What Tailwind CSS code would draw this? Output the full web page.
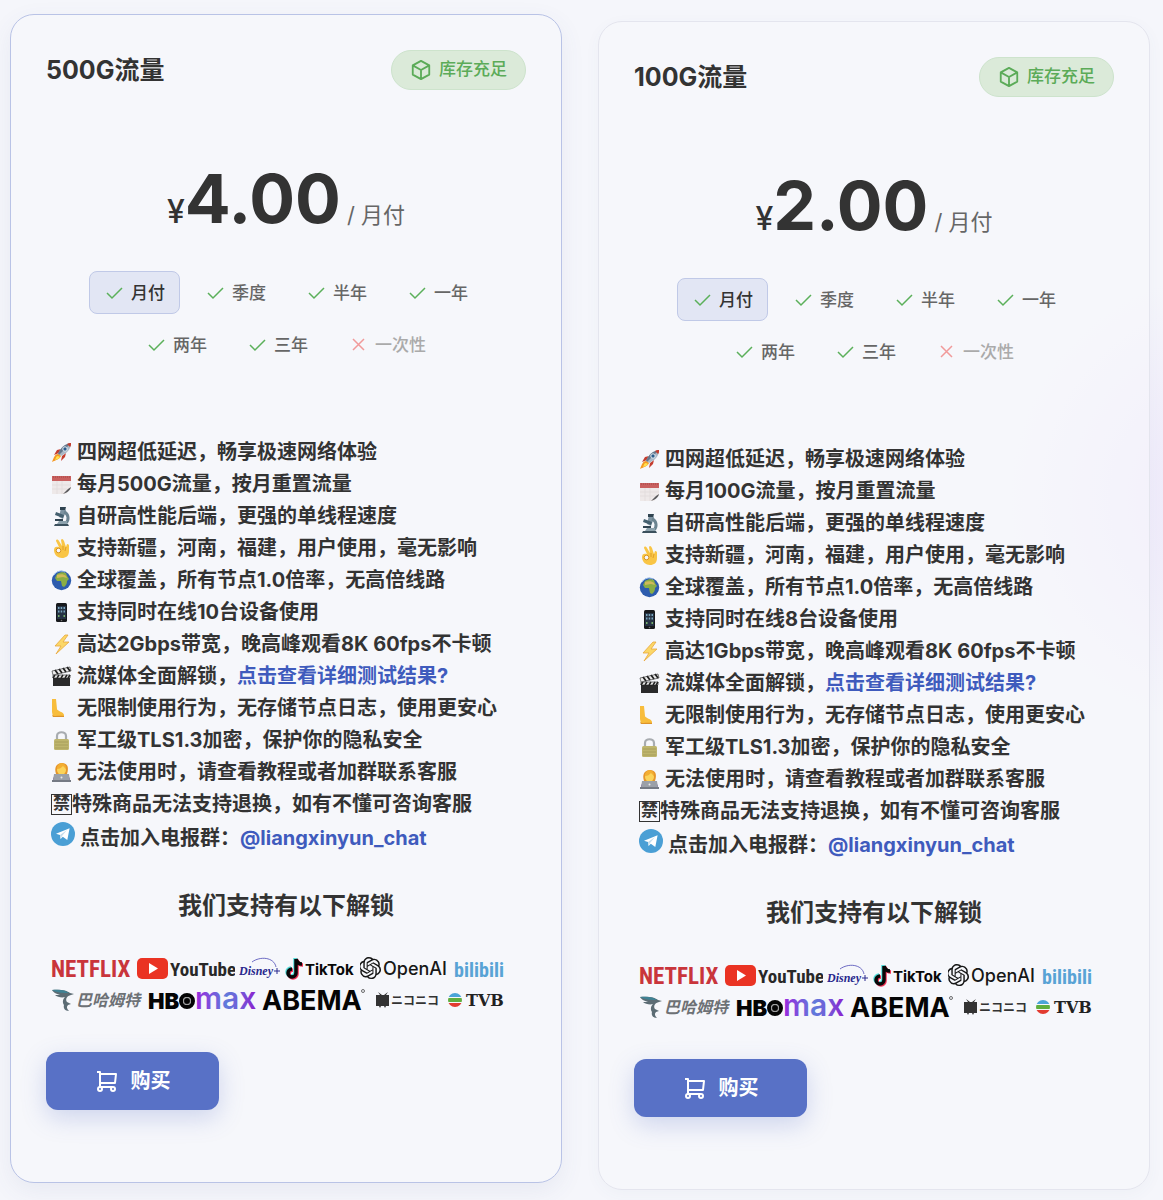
<!doctype html>
<html lang="zh-CN">
  <head>
    <meta charset="UTF-8" />
    <meta name="viewport" content="width=device-width, initial-scale=1.0" />
    <title>套餐</title>
    <script src="https://cdn.jsdelivr.net/npm/@tailwindcss/browser@4"></script>
  </head>
  <body
    class="min-h-screen bg-[#f5f6fb] bg-[radial-gradient(circle_at_1240px_500px,#ece6fa_0,#f5f6fb_230px)] font-['Inter','Noto_Sans_CJK_SC',sans-serif] text-[#333]"
  >
    <main id="plans" class="grid grid-cols-2 items-start gap-9 pt-[21px] pr-[13px] pl-[10px]"></main>

    <script>
      const icons = {
        rocket: `<path d="M8 11 3 13l3-5 4-1z" fill="#c43d2f"/><path d="m11 14-1 5 4-4 1-4z" fill="#c43d2f"/><path d="M7 12c3-7 7-10 13-11 0 6-4 10-10 13z" fill="#a9b8c6"/><path d="M7 12C10 5 14 2 20 1l-12 12z" fill="#66798c"/><path d="M16 2c1-1 3-1 4-1 0 2 0 3-1 4z" fill="#c43d2f"/><circle cx="14" cy="7" r="2.2" fill="#2b5d8c" stroke="#e6edf2"/><path d="M7 12c-3 0-4 3-6 8 4-2 8-3 9-6z" fill="#f59a23"/><path d="M7 14c-2 0-2 2-3 4 2-1 4-1 5-3z" fill="#ffe14d"/>`,
        calendar: `<path d="M1 3h19v12l-5 5H1z" fill="#eee9e9"/><path d="M1 2h19v5H1z" fill="#c9605f"/><path d="M2 3h17" stroke="#a64747" stroke-dasharray="1 1"/><path d="M1 11h19M1 15h15M6 7v13M11 7v13" stroke="#e0dada" stroke-width=".7"/><path d="M20 13c-1 4-5 6-8 7l5-5z" fill="#59595c"/>`,
        microscope: `<path d="M10 2l4-1 1 4-3 8-4-2z" fill="#7d93a1"/><path d="M9 1h6l-1 3H9z" fill="#2f4350"/><path d="m5 6 8 3-1 3-8-3z" fill="#45606f"/><path d="M13 6c5 2 5 8 2 11" fill="none" stroke="#6c8491" stroke-width="3"/><path d="M4 18h13l1 2H3z" fill="#3b505d"/><path d="M4 13h8v2H4z" fill="#2f4350"/><path d="M8 15h8v3H6z" fill="#8da2ad"/>`,
        hand: `<path d="M8 9 5 3c0-2 2-2 3 0l3 5-1-6c1-2 2-1 3 1l2 6 1-3c2 0 2 1 2 2v5c0 5-3 7-7 7s-8-3-8-8c0-3 2-4 5-3z" fill="#f9c545"/><circle cx="7.500" cy="12.500" r="2.300" fill="#f5f7fb" stroke="#d99422"/><path d="M12 8v4M15 9l-1 4" stroke="#d99422" stroke-width=".8"/>`,
        earth: `<circle cx="10.5" cy="10.5" r="9.7" fill="#2d5cae"/><path d="M6 4c3-2 7-2 9-1l1 3 2 3-2 2c0 3-1 4-3 6l-2-1-1-5-4 0-2-3z" fill="#8aad45"/><path d="M6 5c3-1 7-1 9 1l1 2-4-1-6 1z" fill="#d0b95a"/><path d="M3 5C6 1 10 0 14 2" fill="none" stroke="#9dc3ed"/>`,
        phone: `<rect x="5" y="1" width="11" height="19" rx="1.5" fill="#17191c"/><path d="M6 4h9v13H6z" fill="#263344"/><path d="M7 5h1.5v2H7zM9.700 5h1.500v2H9.700zM12.500 5H14v2h-1.500zM7 8.500h1.500v2H7zM9.700 8.500h1.500v2H9.700zM12.500 8.500H14v2h-1.500z" fill="#79a5bd"/><path d="M7 13h1.500v2H7zM12.500 13H14v2h-1.500z" fill="#76b06a"/><circle cx="10.500" cy="18.500" r=".8" fill="#777"/>`,
        bolt: `<path d="M14 1 4 12h6l-5 8L18 8h-6l5-7z" fill="#fbd768" stroke="#e9a73c" stroke-width=".8"/>`,
        clapper: `<path d="M2 9h17v11H2z" fill="#2a2a2b"/><path d="M2 9h17v3H2z" fill="#eee" stroke="#222" stroke-width=".6"/><path d="m4 9-2 3m6-3-2 3m6-3-2 3m6-3-2 3m5-3-2 3" stroke="#222" stroke-width="1.500"/><path d="m1 5 18-4 1 4L2 9z" fill="#eee" stroke="#222" stroke-width=".6"/><path d="m4 4 3 4m1-5 3 4m1-5 3 4m1-5 3 4" stroke="#222" stroke-width="1.800"/>`,
        leg: `<path d="M1 1h4l1 10c0 2 7 3 7 6v2H2l-1-5z" fill="#f8bd3c"/><path d="M1 17c3 2 6 0 12 1v1H2z" fill="#dd932a"/>`,
        lock: `<path d="M6 10V6c0-5 9-5 9 0v4" fill="none" stroke="#a8acb0" stroke-width="2.200"/><rect x="3" y="9" width="15" height="11" rx="1.500" fill="#beb56d"/><path d="M4 12h13M4 15h13M4 18h13" stroke="#a29a55" stroke-width=".8"/>`,
        coder: `<path d="M5 12C3 6 5 1 11 1s7 5 5 11z" fill="#e5962b"/><circle cx="10.500" cy="8" r="4.500" fill="#fbd35a"/><path d="M6 7c3 0 4-1 6-3l3 3c1-7-9-8-9 0z" fill="#f3ae32"/><path d="M2 18c0-4 3-6 8-6s9 2 9 6z" fill="#7a5aa0"/><path d="M3 12h15l1 7H2z" fill="#9ba0a8"/><path d="M1 18h19v2H1z" fill="#757a84"/><circle cx="10.500" cy="15.500" r="1" fill="#e9e9e9"/>`,
      };

      const telegram = `<svg class="-mt-2 size-6 shrink-0" viewBox="0 0 24 24"><circle cx="12" cy="12" r="12" fill="#4a9fd5"/><path d="M5 11.800 18.600 6.300 16.300 18l-4.500-3.300-2.200 2.200-.6-4z" fill="#fff"/><path d="m9 13 7-5-5 6-1.400 2.900z" fill="#c6ddec"/></svg>`;

      const logos = `
        <div class="flex h-8 items-center gap-1">
          <svg class="h-8 w-[82px]" viewBox="0 0 82 32"><text x="0" y="25" font-family="Roboto Condensed, Liberation Sans Narrow, Inter" font-size="23" font-weight="700" fill="#c9353b">NETFLIX</text></svg>
          <svg class="h-8 w-[98px]" viewBox="0 0 98 32"><rect y="6" width="31" height="21" rx="5" fill="#ea3323"/><path d="m12 11 9 5.500-9 5.500z" fill="#fff"/><text x="33" y="24" font-family="Roboto Condensed, Liberation Sans Narrow, Roboto" font-size="19" font-weight="700" fill="#282828">YouTube</text></svg>
          <svg class="h-8 w-[42px]" viewBox="0 0 42 32"><path d="M13 10c8-6 22-5 24 5" fill="none" stroke="#4a48b5" stroke-width=".8"/><text x="0" y="23" font-family="Liberation Serif" font-style="italic" font-size="12" font-weight="700" fill="#28288d">Disney</text><path d="M38 16v6M35 19h6" stroke="#28288d"/></svg>
          <svg class="h-8 w-[71px]" viewBox="0 0 71 32"><g fill="none" stroke-width="3.500"><path d="M10 6v14a4 4 0 1 1-4-4M10 7c1 4 3 5 6 5" stroke="#53ddd9"/><path d="M12 8v14a4 4 0 1 1-4-4M12 8c1 4 3 5 6 5" stroke="#ef3156"/><path d="M11 7v14a4 4 0 1 1-4-4M11 7c1 4 3 5 6 5" stroke="#080808"/></g><text x="20" y="23" font-family="Inter" font-size="15" font-weight="700" fill="#080808">TikTok</text></svg>
          <svg class="h-8 w-[90px]" viewBox="0 0 90 32"><path transform="translate(-1 5) scale(.92)" fill="#171717" d="M22.2819 9.8211a5.9847 5.9847 0 0 0-.5157-4.9108 6.0462 6.0462 0 0 0-6.5098-2.9A6.0651 6.0651 0 0 0 4.9807 4.1818a5.9847 5.9847 0 0 0-3.9977 2.9 6.0462 6.0462 0 0 0 .7427 7.0966 5.98 5.98 0 0 0 .511 4.9107 6.051 6.051 0 0 0 6.5146 2.9001A5.9847 5.9847 0 0 0 13.2599 24a6.0557 6.0557 0 0 0 5.7718-4.2058 5.9894 5.9894 0 0 0 3.9977-2.9001 6.0557 6.0557 0 0 0-.7475-7.0729zm-9.022 12.6081a4.4755 4.4755 0 0 1-2.8764-1.0408l.1419-.0804 4.7783-2.7582a.7948.7948 0 0 0 .3927-.6813v-6.7369l2.02 1.1686a.071.071 0 0 1 .038.052v5.5826a4.504 4.504 0 0 1-4.4945 4.4944zm-9.6607-4.1254a4.4708 4.4708 0 0 1-.5346-3.0137l.142.0852 4.783 2.7582a.7712.7712 0 0 0 .7806 0l5.8428-3.3685v2.3324a.0804.0804 0 0 1-.0332.0615L9.74 19.9502a4.4992 4.4992 0 0 1-6.1408-1.6464zM2.3408 7.8956a4.485 4.485 0 0 1 2.3655-1.9728V11.6a.7664.7664 0 0 0 .3879.6765l5.8144 3.3543-2.0201 1.1685a.0757.0757 0 0 1-.071 0l-4.8303-2.7865A4.504 4.504 0 0 1 2.3408 7.872zm16.5963 3.8558L13.1038 8.364 15.1192 7.2a.0757.0757 0 0 1 .071 0l4.8303 2.7913a4.4944 4.4944 0 0 1-.6765 8.1042v-5.6772a.79.79 0 0 0-.407-.667zm2.0107-3.0231l-.142-.0852-4.7735-2.7818a.7759.7759 0 0 0-.7854 0L9.409 9.2297V6.8974a.0662.0662 0 0 1 .0284-.0615l4.8303-2.7866a4.4992 4.4992 0 0 1 6.6802 4.66zM8.3065 12.863l-2.02-1.1638a.0804.0804 0 0 1-.038-.0567V6.0742a4.4992 4.4992 0 0 1 7.3757-3.4537l-.142.0805L8.704 5.459a.7948.7948 0 0 0-.3927.6813zm1.0976-2.3654l2.602-1.4998 2.6069 1.4998v2.9994l-2.5974 1.4997-2.6067-1.4997Z"/><text x="23" y="23" font-family="Inter" font-size="18" font-weight="500" fill="#171717">OpenAI</text></svg>
          <svg class="h-8 w-[50px]" viewBox="0 0 50 32"><text x="0" y="25" font-family="Roboto Condensed, Liberation Sans Narrow, Roboto" font-size="20" font-weight="700" fill="#58a3d5">bilibili</text></svg>
        </div>
        <div class="flex h-8 items-center gap-1">
          <svg class="h-8 w-[93px]" viewBox="0 0 93 32"><path d="M1 6c7-1 15 0 18 3l4 1-3 1c-4 1-6 4-4 7l4 2-3 1c-2 2-1 4 1 6-4 0-6-3-5-6-2-3-1-6 1-8-3 1-8 0-10-2l5 0c-4-1-7-3-8-5z" fill="#5c6c74"/><path d="M1 6c7-1 14 0 17 3-5 0-12 0-17-3z" fill="#3f8294"/><text x="25" y="22" font-family="Noto Sans CJK TC" font-style="italic" font-size="16" font-weight="700" fill="#6d7175">巴哈姆特</text></svg>
          <svg class="h-8 w-[110px] overflow-visible" viewBox="0 0 110 32"><defs><linearGradient id="max"><stop stop-color="#9a27dd"/><stop offset=".5" stop-color="#607bdb"/><stop offset=".75" stop-color="#7558d8"/><stop offset="1" stop-color="#8c1fce"/></linearGradient></defs><text y="25" font-family="Inter" font-size="22" font-weight="900" fill="#050505">HB</text><circle cx="39" cy="17" r="6" fill="none" stroke="#050505" stroke-width="4"/><circle cx="39" cy="17" r="3.500" fill="#050505" stroke="#aaa" stroke-width=".8"/><text x="47" y="25" font-family="Inter" font-size="30" font-weight="600" fill="url(#max)">max</text></svg>
          <svg class="h-8 w-[106px] overflow-visible" viewBox="0 0 106 32"><text y="26" font-family="Inter" font-size="27" font-weight="700" fill="#050505">ABEMA</text><circle cx="101" cy="7" r="1.500" fill="none" stroke="#333" stroke-width=".7"/></svg>
          <svg class="ml-1 h-8 w-[64px]" viewBox="0 0 64 32"><path d="M0 11h4l-2-3 4 3h2l4-3-2 3h3v11h-3l-1 2-1-2H5l-1 2-1-2H0z" fill="#333"/><text x="15" y="21" font-family="Noto Sans CJK JP" font-size="12" font-weight="700" fill="#333">ニコニコ</text></svg>
          <svg class="ml-1 h-8 w-[58px]" viewBox="0 0 58 32"><clipPath id="disc"><circle cx="7" cy="16" r="7"/></clipPath><g clip-path="url(#disc)"><path d="M0 9h14v4H0z" fill="#4aa4d8"/><path d="M0 14h14v4H0z" fill="#5fae3f"/><path d="M0 19h14v4H0z" fill="#e23b30"/></g><text x="18" y="22" font-family="DejaVu Serif, Liberation Serif" font-size="16" font-weight="700" fill="#222">TVB</text></svg>
        </div>`;

      const check = `<svg class="size-[17px]" viewBox="0 0 17 17" fill="none" stroke="#5bb05a" stroke-width="1.500"><path d="m1 8 5 5L16 3"/></svg>`;
      const cross = `<svg class="size-[17px]" viewBox="0 0 17 17" fill="none" stroke="#f19a9a" stroke-width="1.500"><path d="m3 2 11 11M14 2 3 13"/></svg>`;

      const periods = ["月付", "季度", "半年", "一年", "两年", "三年", "一次性"];

      const period = (name, i) => `
        <button ${i === 6 ? "disabled" : ""} class="flex h-[43px] items-center gap-2 rounded-lg border pt-[2px] pr-[14px] pl-4 text-[17px] font-medium ${
          i === 0 ? "border-[#c0c9e7] bg-[#e2e6f4]" : i === 6 ? "border-transparent text-[#aaa]" : "border-transparent text-[#666]"
        }">${i === 6 ? cross : check}${name}</button>`;

      const row = (icon, text) => `
        <li class="flex h-8 items-center gap-[5px]">
          <svg class="size-[21px] shrink-0" viewBox="0 0 21 21">${icons[icon]}</svg>
          <span>${text}</span>
        </li>`;

      const card = (plan) => `
        <section class="rounded-3xl border px-[35px] pt-[35px] pb-[72px] ${
          plan.active
            ? "-mt-[7px] border-[#b9c3e6] bg-[#f6f7fb] shadow-[0_8px_24px_rgba(80,90,140,0.08)]"
            : "border-[#e4e5ee] bg-[#f7f8fc]/50 shadow-[0_4px_16px_rgba(80,90,140,0.04)]"
        }">
          <header class="flex h-10 items-center justify-between">
            <h2 class="text-[25px] leading-10 font-bold">${plan.traffic}流量</h2>
            <span class="flex h-10 items-center gap-[7px] rounded-full border border-[#cde3cc] bg-[#dbead9] px-[18px] text-[17px] font-medium text-[#5bab58]">
              <svg class="size-[22px]" viewBox="0 0 24 24" fill="none" stroke="currentColor" stroke-width="2" stroke-linejoin="round">
                <path d="m12 2 9 5v10l-9 5-9-5V7zM3 7l9 5 9-5M12 12v10" />
              </svg>
              库存充足
            </span>
          </header>
          <div class="mt-[68px] flex h-20 items-baseline justify-center leading-20">
            <span class="text-[32px] font-medium">¥</span>
            <span class="text-[68px] font-bold">${plan.price}</span>
            <span class="ml-[6px] text-[22px] text-[#666]">/ 月付</span>
          </div>
          <div class="mt-[33px] flex flex-wrap justify-center gap-x-[10px] gap-y-[9px]">${periods.map(period).join("")}</div>
          <ul class="mt-[70px] pl-[5px] text-[20px] font-bold whitespace-nowrap">
            ${row("rocket", "四网超低延迟，畅享极速网络体验")}
            ${row("calendar", `每月${plan.traffic}流量，按月重置流量`)}
            ${row("microscope", "自研高性能后端，更强的单线程速度")}
            ${row("hand", "支持新疆，河南，福建，用户使用，毫无影响")}
            ${row("earth", "全球覆盖，所有节点1.0倍率，无高倍线路")}
            ${row("phone", `支持同时在线${plan.devices}台设备使用`)}
            ${row("bolt", `高达${plan.speed}带宽，晚高峰观看8K 60fps不卡顿`)}
            ${row("clapper", `流媒体全面解锁，<a href="#" class="text-[#3f5bbd]">点击查看详细测试结果?</a>`)}
            ${row("leg", "无限制使用行为，无存储节点日志，使用更安心")}
            ${row("lock", "军工级TLS1.3加密，保护你的隐私安全")}
            ${row("coder", "无法使用时，请查看教程或者加群联系客服")}
            <li class="flex h-8 items-center"><span class="flex size-[21px] items-center justify-center border border-[#333] text-[17px]">禁</span>特殊商品无法支持退换，如有不懂可咨询客服</li>
            <li class="flex h-9 items-center gap-[5px]">${telegram}<span>点击加入电报群：<a href="#" class="text-[#3f5bbd]">@liangxinyun_chat</a></span></li>
          </ul>
          <h3 class="mt-[30px] text-center text-[24px] leading-10 font-semibold">我们支持有以下解锁</h3>
          <div class="mt-[26px] pl-[5px]">${logos}</div>
          <button class="mt-9 flex h-[58px] w-[173px] items-center justify-center gap-3 rounded-xl bg-[#5871c6] text-[20px] font-bold text-white shadow-[0_8px_24px_rgba(88,113,198,0.25)]">
            <svg class="size-6" viewBox="0 0 24 24" fill="none" stroke="currentColor" stroke-width="2" stroke-linejoin="round">
              <path d="M2 3h3v15h13M5 5h16l-1 9H5" />
              <circle cx="5" cy="20" r="2" /><circle cx="18" cy="20" r="2" />
            </svg>
            购买
          </button>
        </section>`;

      const plans = [
        { traffic: "500G", price: "4.00", devices: 10, speed: "2Gbps", active: true },
        { traffic: "100G", price: "2.00", devices: 8, speed: "1Gbps", active: false },
      ];
      document.querySelector("#plans").innerHTML = plans.map(card).join("");
    </script>
  </body>
</html>
